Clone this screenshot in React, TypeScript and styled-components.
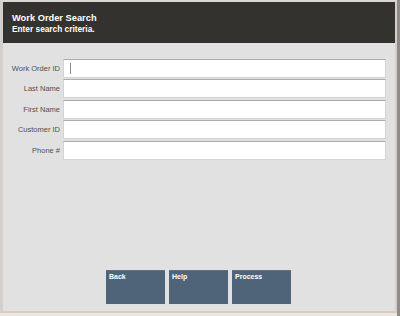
import React from "react";
import styled, { createGlobalStyle } from "styled-components";

const Global = createGlobalStyle`
  html, body { margin: 0; padding: 0; background: #e1e1e1; }
  body { font-family: "Liberation Sans", Arial, sans-serif; }
`;

const Frame = styled.div`
  width: 400px;
  height: 316px;
  box-sizing: border-box;
  border-right: 3px solid #8c8c8c;
  background: #ebe7e4;
  display: flex;
`;

const Panel = styled.div`
  flex: 1;
  box-sizing: border-box;
  margin-bottom: 3px;
  border-top: 2px solid #d9d6d3;
  border-left: 3px solid #d5cfcb;
  border-right: 2px solid #d9cdc6;
  border-bottom: 2px solid #d9cbc2;
  background: #e1e1e1;
  display: flex;
  flex-direction: column;
`;

const Header = styled.header`
  height: 41px;
  background: #34322e;
  color: #ffffff;
  padding: 11px 0 0 9px;
  box-sizing: border-box;
  font-weight: bold;
`;

const Title = styled.div`
  font-size: 9.3px;
  line-height: 11px;
`;

const Subtitle = styled.div`
  font-size: 8.3px;
  line-height: 10px;
`;

const Form = styled.div`
  display: grid;
  grid-template-columns: 57px 1fr;
  column-gap: 3px;
  row-gap: 1.6px;
  padding: 15.5px 9px 0 0;
`;

const Label = styled.label`
  font-size: 7.5px;
  color: #505050;
  text-align: right;
  align-self: center;
`;

const Field = styled.div<{ $focused?: boolean }>`
  height: 19px;
  box-sizing: border-box;
  background: #ffffff;
  border: 1px solid #d4d4d4;
  border-top-color: #acacac;
  position: relative;
  &::after {
    content: "";
    display: ${(p) => (p.$focused ? "block" : "none")};
    position: absolute;
    left: 6px;
    top: 3px;
    width: 1px;
    height: 11px;
    background: #8a8a8a;
  }
`;

const Spacer = styled.div`
  flex: 1;
`;

const ButtonBar = styled.div`
  display: flex;
  gap: 4px;
  padding-left: 103px;
  margin-bottom: 7px;
`;

const ActionButton = styled.button`
  width: 59px;
  height: 34px;
  background: #4f6479;
  border: none;
  border-top: 1px solid #5c7086;
  color: #ffffff;
  font-family: "Liberation Sans", Arial, sans-serif;
  font-size: 7px;
  font-weight: bold;
  text-align: left;
  padding: 2px 3px;
  display: flex;
  align-items: flex-start;
`;

const fields = ["Work Order ID", "Last Name", "First Name", "Customer ID", "Phone #"];

export default function App() {
  return (
    <Frame>
      <Global />
      <Panel>
        <Header>
          <Title>Work Order Search</Title>
          <Subtitle>Enter search criteria.</Subtitle>
        </Header>
        <Form>
          {fields.map((f, i) => (
            <React.Fragment key={f}>
              <Label>{f}</Label>
              <Field $focused={i === 0} />
            </React.Fragment>
          ))}
        </Form>
        <Spacer />
        <ButtonBar>
          <ActionButton>Back</ActionButton>
          <ActionButton>Help</ActionButton>
          <ActionButton>Process</ActionButton>
        </ButtonBar>
      </Panel>
    </Frame>
  );
}
